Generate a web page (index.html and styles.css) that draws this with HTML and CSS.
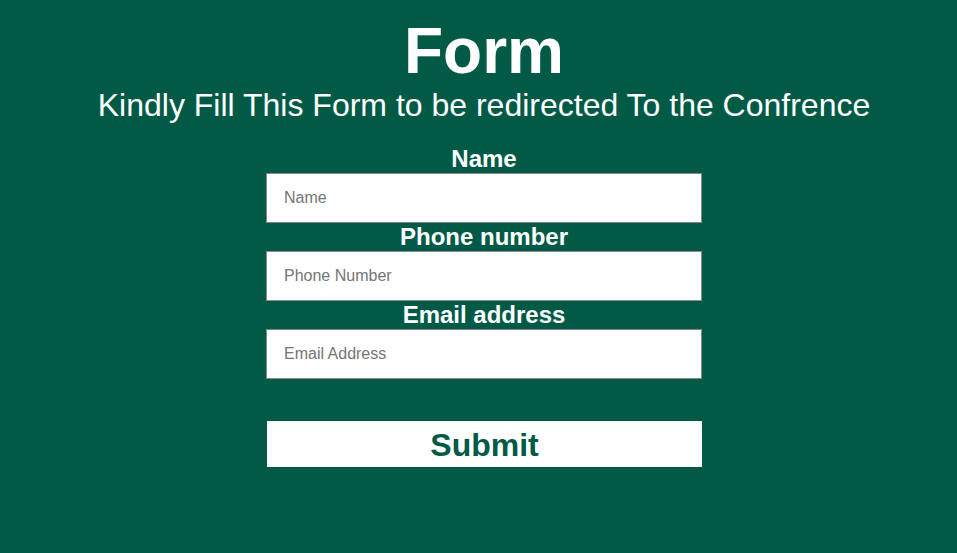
FILE: index.html
```html
<!DOCTYPE html>
<html>
<head>
<meta charset="utf-8">
<link rel="stylesheet" href="styles.css">
</head>
<body>
<div class="page">
  <h1 class="title">Form</h1>
  <p class="subtitle">Kindly Fill This Form to be redirected To the Confrence</p>
  <form class="form">
    <label class="label" for="name">Name</label>
    <input class="field" id="name" type="text" placeholder="Name">
    <label class="label" for="phone">Phone number</label>
    <input class="field" id="phone" type="text" placeholder="Phone Number">
    <label class="label" for="email">Email address</label>
    <input class="field" id="email" type="text" placeholder="Email Address">
    <button class="submit" type="button">Submit</button>
  </form>
</div>
</body>
</html>
```
FILE: styles.css
```css
html, body {
  margin: 0;
  padding: 0;
  background: #015a46;
  font-family: "Liberation Sans", Arial, sans-serif;
  color: #ffffff;
}
.page {
  display: flex;
  flex-direction: column;
  align-items: center;
  padding-top: 14px;
  padding-left: 11px;
}
.title {
  margin: 0;
  font-size: 64px;
  font-weight: bold;
  line-height: 74px;
}
.subtitle {
  margin: 0;
  font-size: 32px;
  line-height: 34px;
}
.form {
  display: flex;
  flex-direction: column;
  align-items: center;
  width: 436px;
  margin-top: 23px;
}
.label {
  font-size: 24px;
  font-weight: bold;
  line-height: 28px;
}
.field {
  box-sizing: border-box;
  width: 436px;
  height: 50px;
  border: 1px solid #8a8a8a;
  padding: 0 17px;
  font-family: "Liberation Sans", Arial, sans-serif;
  font-size: 16px;
  color: #333;
  background: #fff;
}
.field::placeholder {
  color: #757575;
}
.submit {
  box-sizing: border-box;
  margin-top: 42px;
  width: 435px;
  height: 46px;
  border: none;
  background: #fff;
  color: #015a46;
  font-family: "Liberation Sans", Arial, sans-serif;
  font-size: 32px;
  font-weight: bold;
  padding: 3px 0 0;
  margin-left: 1px;
}
```
